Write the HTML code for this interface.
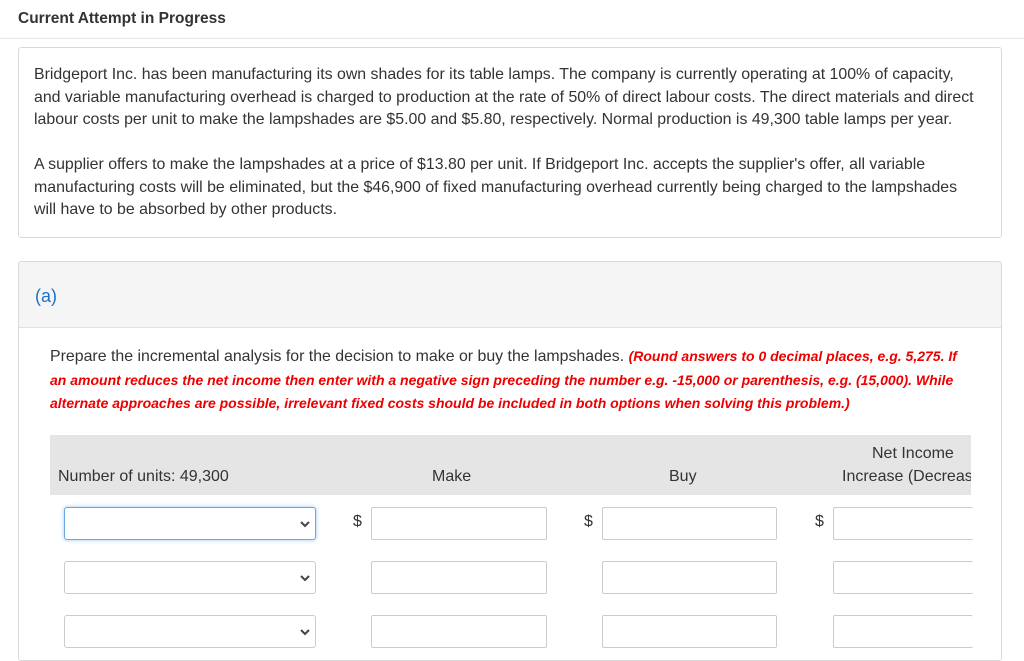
<!DOCTYPE html>
<html><head><meta charset="utf-8"><style>
*{box-sizing:border-box;margin:0;padding:0}
body{width:1024px;height:651px;overflow:hidden;background:#fff;font-family:"Liberation Sans",sans-serif;color:#333;position:relative}
.abs{position:absolute;white-space:nowrap}
.hdr{left:18px;top:10px;font-size:15.5px;font-weight:bold;color:#333}
.line{left:0;top:38px;width:1024px;height:1px;background:#e6e6e6}
.box1{left:18px;top:47px;width:984px;height:191px;border:1px solid #d9d9d9;border-radius:3px}
.p{font-size:15.9px;line-height:22.6px;color:#333}
.box2{left:18px;top:261px;width:984px;height:400px;border:1px solid #d9d9d9;border-radius:3px;overflow:hidden}
.box2top{position:absolute;left:0;top:0;width:100%;height:66px;background:#f5f5f5;border-bottom:1px solid #e0e0e0}
.a{left:16px;top:24px;font-size:18px;color:#1a73c8;position:absolute}
.red{color:#e00;font-weight:bold;font-style:italic;font-size:14px}
.th{left:50px;top:435px;width:921px;height:60px;background:#e5e5e5;overflow:hidden}
.th div{position:absolute;font-size:16px;color:#333;white-space:nowrap}
.sel{width:252px;height:33px;border:1px solid #ccc;border-radius:3px;background:#fff}
.sel.f{border-color:#6aa8e0;box-shadow:0 0 4px #9cc8f0}
.sel svg{position:absolute;right:5px;top:12px}
.in{height:33px;border:1px solid #ccc;border-radius:2px;background:#fff}
.d{font-size:16px;color:#333}
</style></head><body>
<div class="abs hdr">Current Attempt in Progress</div>
<div class="abs line"></div>
<div class="abs box1"></div>
<div class="abs p" style="left:34px;top:64px">Bridgeport Inc. has been manufacturing its own shades for its table lamps. The company is currently operating at 100% of capacity,<br>and variable manufacturing overhead is charged to production at the rate of 50% of direct labour costs. The direct materials and direct<br>labour costs per unit to make the lampshades are $5.00 and $5.80, respectively. Normal production is 49,300 table lamps per year.</div>
<div class="abs p" style="left:34px;top:154px">A supplier offers to make the lampshades at a price of $13.80 per unit. If Bridgeport Inc. accepts the supplier's offer, all variable<br>manufacturing costs will be eliminated, but the $46,900 of fixed manufacturing overhead currently being charged to the lampshades<br>will have to be absorbed by other products.</div>
<div class="abs box2"><div class="box2top"></div><div class="a">(a)</div></div>
<div class="abs p" style="left:50px;top:345px">Prepare the incremental analysis for the decision to make or buy the lampshades. <span class="red">(Round answers to 0 decimal places, e.g. 5,275. If</span><br><span class="red">an amount reduces the net income then enter with a negative sign preceding the number e.g. -15,000 or parenthesis, e.g. (15,000). While</span><br><span class="red">alternate approaches are possible, irrelevant fixed costs should be included in both options when solving this problem.)</span></div>
<div class="abs th">
<div style="left:8px;top:33px">Number of units: 49,300</div>
<div style="left:382px;top:33px">Make</div>
<div style="left:619px;top:33px">Buy</div>
<div style="left:822px;top:10px">Net Income</div>
<div style="left:792px;top:33px">Increase (Decrease)</div>
</div>
<div class="abs sel f" style="left:64px;top:507px"><svg width="10" height="8" viewBox="0 0 10 8"><path d="M1 2l4 4 4-4" stroke="#444" stroke-width="2" fill="none"/></svg></div>
<div class="abs sel" style="left:64px;top:561px"><svg width="10" height="8" viewBox="0 0 10 8"><path d="M1 2l4 4 4-4" stroke="#444" stroke-width="2" fill="none"/></svg></div>
<div class="abs sel" style="left:64px;top:615px"><svg width="10" height="8" viewBox="0 0 10 8"><path d="M1 2l4 4 4-4" stroke="#444" stroke-width="2" fill="none"/></svg></div>
<div class="abs d" style="left:353px;top:513px">$</div>
<div class="abs d" style="left:584px;top:513px">$</div>
<div class="abs d" style="left:815px;top:513px">$</div>
<div class="abs in" style="left:371px;top:507px;width:176px"></div>
<div class="abs in" style="left:602px;top:507px;width:175px"></div>
<div class="abs in" style="left:833px;top:507px;width:140px;border-right:none"></div>
<div class="abs in" style="left:371px;top:561px;width:176px"></div>
<div class="abs in" style="left:602px;top:561px;width:175px"></div>
<div class="abs in" style="left:833px;top:561px;width:140px;border-right:none"></div>
<div class="abs in" style="left:371px;top:615px;width:176px"></div>
<div class="abs in" style="left:602px;top:615px;width:175px"></div>
<div class="abs in" style="left:833px;top:615px;width:140px;border-right:none"></div>
</body></html>
